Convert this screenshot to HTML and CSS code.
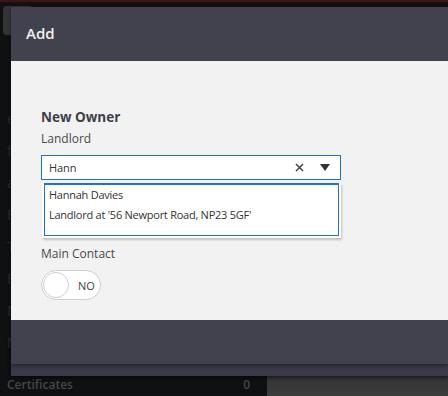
FILE: index.html
```html
<!DOCTYPE html>
<html>
<head lang="en">
    <meta charset="UTF-8">
    <title>Add</title>
    <link rel="stylesheet" href="styles.css">
</head>
<body>
    <div class="page">
        <div class="topbar"></div>
        <div class="side">
            <div class="side-btn"></div>
            <ul class="side-list">
                <li>e</li>
                <li>f</li>
                <li>a</li>
                <li>F</li>
                <li>T</li>
                <li>F</li>
                <li>M</li>
                <li>N</li>
            </ul>
        </div>
        <div class="bottom-row">
            <div class="cert"><span>Certificates</span><span>0</span></div>
            <div class="cert-rest"></div>
        </div>
    </div>

    <div class="modal-back"></div>
    <div class="modal">
        <div class="modal-head">Add</div>
        <div class="modal-body">
            <h3 class="section">New Owner</h3>
            <label class="label">Landlord</label>
            <div class="select">
                <span class="select-text">Hann</span>
                <svg class="select-clear" width="9" height="9" viewBox="0 0 9 9"><path d="M1 1l7 7M8 1L1 8" stroke="#444" stroke-width="1.5"/></svg>
                <svg class="select-arrow" width="10" height="7" viewBox="0 0 10 7"><path d="M0 0h10L5 7z" fill="#333"/></svg>
            </div>
            <div class="menu">
                <div class="menu-inner">
                    <div class="menu-item">Hannah Davies</div>
                    <div class="menu-item">Landlord at '56 Newport Road, NP23 5GF'</div>
                </div>
            </div>
            <label class="label main">Main Contact</label>
            <div class="toggle">
                <span class="knob"></span>
                <span class="toggle-text">NO</span>
            </div>
        </div>
        <div class="modal-foot"></div>
    </div>
</body>
</html>
```

FILE: styles.css
```css
*{
    margin:0;  padding:0;
    box-sizing: border-box;
}
body{
    width:448px;
    height:396px;
    overflow:hidden;
    background-color:#0f1012;
    font-family:"Open Sans","Noto Sans",sans-serif;
    position:relative;
}
.page{
    height:396px;
    display:flex;
    flex-direction:column;
}
.topbar{
    height:3px;
    background-color:#3a1512;
    border-bottom:1px solid #1c1111;
}
.side{
    flex:1;
    padding:3px 0 0 3px;
}
.side-btn{
    width:30px;
    height:29px;
    border-radius:4px;
    background-color:#333436;
}
.side-list{
    list-style:none;
    padding:74px 0 0 4px;
}
.side-list li{
    height:32px;
    font-size:14px;
    color:#2a2b2e;
}
.bottom-row{
    height:20px;
    display:flex;
}
.cert{
    width:267px;
    display:flex;
    justify-content:space-between;
    padding:0 17px 0 7px;
    font-size:12px;
    font-weight:600;
    line-height:18px;
    color:#45464b;
}
.cert-rest{
    flex:1;
    background:linear-gradient(#333335,#3d3d3d);
}
.modal-back{
    position:absolute;
    left:11px;
    right:0;
    top:340px;
    height:36px;
    background:linear-gradient(#2e2e3a,#3c3c4a 40%,#3a3a48);
    box-shadow:0 2px 3px rgba(0,0,0,0.5);
}
.modal{
    position:absolute;
    left:11px;
    right:0;
    top:7px;
    display:flex;
    flex-direction:column;
    box-shadow:0 2px 4px rgba(0,0,0,0.4);
}
.modal-head{
    height:54px;
    background-color:#42424e;
    color:#f0f0f2;
    font-size:15px;
    font-weight:600;
    padding:16px 0 0 15px;
}
.modal-body{
    height:259px;
    background-color:#f2f2f2;
    padding:46px 0 0 30px;
}
.section{
    font-size:13.5px;
    font-weight:700;
    color:#3e3e48;
    line-height:20px;
}
.label{
    display:block;
    font-size:12px;
    color:#4a4a4a;
    line-height:18px;
    margin-top:3px;
}
.select{
    width:300px;
    height:25px;
    margin-top:7px;
    border:1px solid #1f74c4;
    background-color:#fff;
    display:flex;
    align-items:center;
    padding:0 10px 0 7px;
}
.select-text{
    flex:1;
    font-size:11px;
    letter-spacing:-0.1px;
    color:#333;
}
.select-clear{
    margin-right:16px;
}
.menu{
    width:299px;
    margin:3px 0 0 1px;
    background-color:#fff;
    padding:0 2px 2px 2px;
    box-shadow:1px 2px 2px rgba(0,0,0,0.2);
}
.menu-inner{
    border:1px solid #1f74c4;
    border-top-width:2px;
    height:53px;
    padding:0 0 0 4px;
}
.menu-item{
    font-size:11px;
    letter-spacing:-0.25px;
    color:#333;
    line-height:20px;
}
.label.main{
    margin-top:7px;
}
.toggle{
    width:60px;
    height:30px;
    margin-top:7px;
    border:1px solid #cfcfcf;
    border-radius:15px;
    background-color:#fff;
    display:flex;
    align-items:center;
    padding-left:1px;
}
.knob{
    width:26px;
    height:26px;
    border-radius:50%;
    border:1px solid #cfcfcf;
    background-color:#fff;
}
.toggle-text{
    font-size:11px;
    color:#444;
    margin-left:9px;
}
.modal-foot{
    height:44px;
    background-color:#42424e;
}
```
